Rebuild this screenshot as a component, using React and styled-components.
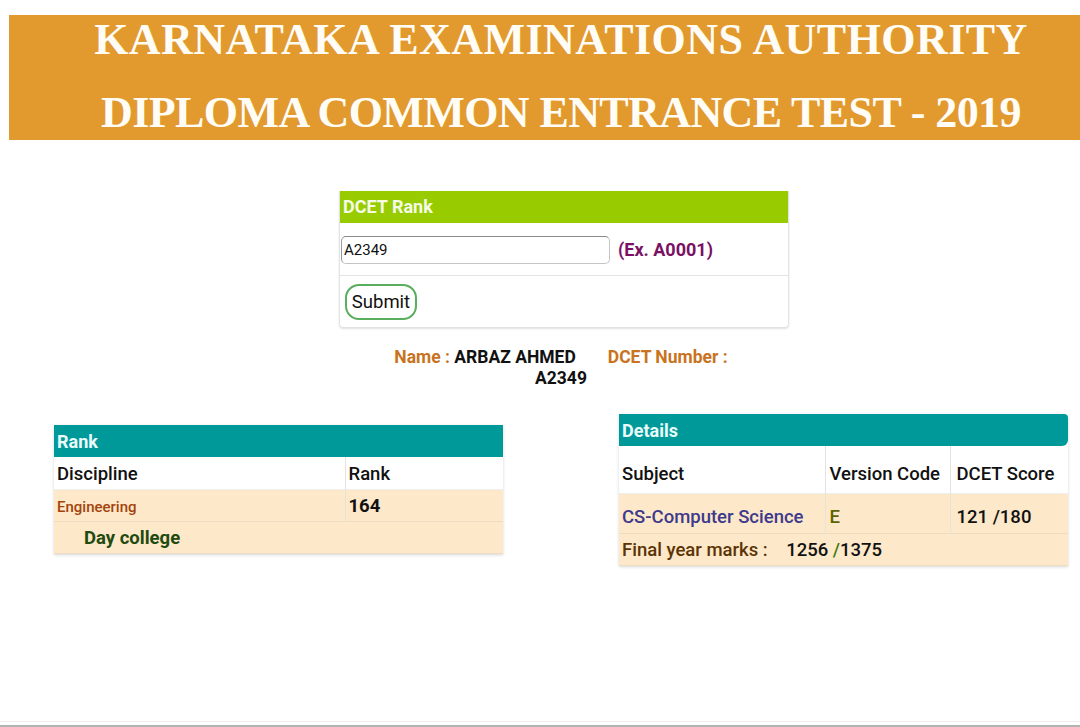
import React from "react";
import styled, { createGlobalStyle } from "styled-components";

const Global = createGlobalStyle`
  html, body { margin: 0; padding: 0; background: #fff; }
  body { font-family: Roboto, "Noto Sans", Arial, sans-serif; color: #111; }
`;

const Page = styled.div`
  min-height: 727px;
  display: flex;
  flex-direction: column;
  box-sizing: border-box;
`;

const Banner = styled.header`
  margin: 15px 0 0 9px;
  height: 125px;
  background: #e29a2f;
  display: flex;
  flex-direction: column;
  align-items: center;
  gap: 23px;
  padding-left: 33px;
  box-sizing: border-box;
`;

const BannerLine = styled.div`
  font-family: "Liberation Serif", "Times New Roman", serif;
  font-weight: 700;
  font-size: 44px;
  line-height: 50px;
  letter-spacing: ${(p) => p.$ls}px;
  color: #fffdf6;
  white-space: nowrap;
`;

const FormCard = styled.section`
  margin: 51px 0 0 339px;
  width: 450px;
  border: 1px solid #e2e2e2;
  border-top: none;
  border-radius: 0 0 4px 4px;
  box-shadow: 0 1px 2px rgba(0, 0, 0, 0.12);
  box-sizing: border-box;
`;

const GreenHead = styled.div`
  background: #99cc00;
  height: 32px;
  line-height: 32px;
  padding-left: 3px;
  color: #f4fbe6;
  font-weight: 700;
  font-size: 18px;
`;

const FormRow = styled.div`
  display: flex;
  align-items: center;
  height: ${(p) => p.$h}px;
  padding-left: ${(p) => p.$pl}px;
  border-bottom: ${(p) => (p.$line ? "1px solid #e4e4e4" : "none")};
  box-sizing: border-box;
`;

const Input = styled.input`
  width: 269px;
  height: 28px;
  box-sizing: border-box;
  border: 1px solid #c4c4c4;
  border-top-color: #8a8a8a;
  border-left-color: #9a9a9a;
  border-radius: 5px;
  font-family: Roboto, Arial, sans-serif;
  font-size: 15px;
  padding: 0 2px;
  color: #111;
  margin-top: 1px;
`;

const Hint = styled.span`
  margin-left: 8px;
  color: #7a1164;
  font-weight: 700;
  font-size: 18px;
`;

const SubmitButton = styled.button`
  width: 72px;
  height: 36px;
  border: 2px solid #58ae5c;
  border-radius: 14px;
  background: #fff;
  font-family: Roboto, Arial, sans-serif;
  font-size: 18.5px;
  color: #111;
  padding: 0;
  margin-top: 1px;
`;

const NameBlock = styled.div`
  margin: 19px 0 0 371px;
  width: 380px;
  text-align: center;
  font-weight: 700;
  font-size: 17.5px;
  line-height: 21px;
  white-space: nowrap;
`;

const Label = styled.span`
  color: #c97321;
  margin-left: ${(p) => p.$ml || 0}px;
`;

const Value = styled.span`
  color: #111;
`;

const Tables = styled.div`
  display: flex;
  align-items: flex-start;
  margin: 25px 0 0 54px;
  gap: 116px;
`;

const Table = styled.table`
  width: 449px;
  border-collapse: collapse;
  margin-top: ${(p) => p.$mt || 0}px;
  box-shadow: 0 1px 3px rgba(0, 0, 0, 0.16);
  font-size: 18.5px;
`;

const TealHead = styled.th`
  background: #009999;
  color: #e9fbfb;
  font-weight: 700;
  font-size: 18px;
  text-align: left;
  height: 32px;
  padding: 0 0 0 3px;
  border-radius: ${(p) => (p.$round ? "0 4px 6px 0" : "0")};
`;

const Row = styled.tr`
  background: ${(p) => (p.$peach ? "#fde8c9" : "#fff")};
  height: ${(p) => p.$h}px;
  border-bottom: 1px solid ${(p) => (p.$peach ? "#eedcc2" : "#eeeeee")};
`;

const Cell = styled.td`
  padding: 0 0 0 ${(p) => p.$pl || 3}px;
  width: ${(p) => (p.$w ? `${p.$w}px` : "auto")};
  border-right: ${(p) => (p.$div ? "1px solid #e6e2dc" : "none")};
  color: ${(p) => p.$color || "#111"};
  font-weight: ${(p) => p.$weight || 700};
  font-size: ${(p) => p.$fs || 18.5}px;
  vertical-align: ${(p) => p.$va || "middle"};
  padding-top: ${(p) => p.$pt || 0}px;
  box-sizing: border-box;
  white-space: nowrap;
`;

const Slash = styled.span`
  color: #3d7d10;
`;

const Spacer = styled.div`
  flex: 1;
`;

const FooterLine = styled.div`
  height: 6px;
  border-top: 1px solid #f0f0f0;
  border-bottom: 2px solid #b3b3b3;
  box-sizing: border-box;
`;

export default function App() {
  return (
    <Page>
      <Global />
      <Banner>
        <BannerLine $ls={0.45}>KARNATAKA EXAMINATIONS AUTHORITY</BannerLine>
        <BannerLine $ls={-0.6}>DIPLOMA COMMON ENTRANCE TEST - 2019</BannerLine>
      </Banner>

      <FormCard>
        <GreenHead>DCET Rank</GreenHead>
        <FormRow $h={53} $pl={1} $line>
          <Input defaultValue="A2349" />
          <Hint>(Ex. A0001)</Hint>
        </FormRow>
        <FormRow $h={51} $pl={5}>
          <SubmitButton>Submit</SubmitButton>
        </FormRow>
      </FormCard>

      <NameBlock>
        <Label>Name : </Label>
        <Value>ARBAZ AHMED</Value>
        <Label $ml={32}>DCET Number : </Label>
        <br />
        <Value>A2349</Value>
      </NameBlock>

      <Tables>
        <Table $mt={11}>
          <thead>
            <tr>
              <TealHead colSpan={2}>Rank</TealHead>
            </tr>
          </thead>
          <tbody>
            <Row $h={32}>
              <Cell $w={291} $div $weight={500} $pt={2}>Discipline</Cell>
              <Cell $weight={500} $pt={2}>Rank</Cell>
            </Row>
            <Row $h={32} $peach>
              <Cell $div $color="#a3440d" $weight={500} $fs={15} $pt={3}>Engineering</Cell>
              <Cell $va="top" $pt={5}>164</Cell>
            </Row>
            <Row $h={32} $peach>
              <Cell colSpan={2} $pl={30} $color="#1f4a10" $pt={2}>Day college</Cell>
            </Row>
          </tbody>
        </Table>

        <Table>
          <thead>
            <tr>
              <TealHead colSpan={3} $round>Details</TealHead>
            </tr>
          </thead>
          <tbody>
            <Row $h={47}>
              <Cell $w={206} $div $weight={500} $pt={10}>Subject</Cell>
              <Cell $w={125} $div $weight={500} $pl={4} $pt={10}>Version Code</Cell>
              <Cell $weight={500} $pl={6} $pt={10}>DCET Score</Cell>
            </Row>
            <Row $h={40} $peach>
              <Cell $div $color="#3e3a8c" $weight={500} $pt={8}>CS-Computer Science</Cell>
              <Cell $div $color="#5b6400" $weight={500} $pl={4} $pt={8}>E</Cell>
              <Cell $weight={500} $pl={6} $pt={8}>121 /180</Cell>
            </Row>
            <Row $h={32} $peach>
              <Cell colSpan={3} $color="#5b3405" $weight={500} $pt={1}>
                Final year marks :{"\u00a0\u00a0\u00a0\u00a0"}
                <Value>1256 <Slash>/</Slash>1375</Value>
              </Cell>
            </Row>
          </tbody>
        </Table>
      </Tables>

      <Spacer />
      <FooterLine />
    </Page>
  );
}
